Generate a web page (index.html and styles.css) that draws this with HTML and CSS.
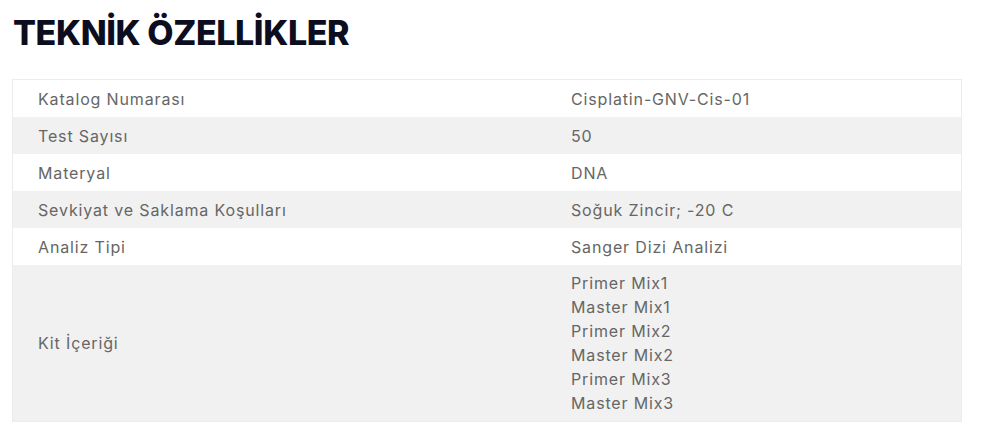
FILE: index.html
```html
<!DOCTYPE html>
<html lang="tr">
<head>
<meta charset="utf-8">
<link rel="stylesheet" href="styles.css">
</head>
<body>
<section class="specs">
  <h2 class="specs-title">TEKNİK ÖZELLİKLER</h2>
  <table class="specs-table">
    <tbody>
      <tr><td class="label">Katalog Numarası</td><td class="value">Cisplatin-GNV-Cis-01</td></tr>
      <tr><td class="label">Test Sayısı</td><td class="value">50</td></tr>
      <tr><td class="label">Materyal</td><td class="value">DNA</td></tr>
      <tr><td class="label">Sevkiyat ve Saklama Koşulları</td><td class="value">Soğuk Zincir; -20 C</td></tr>
      <tr><td class="label">Analiz Tipi</td><td class="value">Sanger Dizi Analizi</td></tr>
      <tr class="multi"><td class="label">Kit İçeriği</td><td class="value">Primer Mix1<br>Master Mix1<br>Primer Mix2<br>Master Mix2<br>Primer Mix3<br>Master Mix3</td></tr>
    </tbody>
  </table>
</section>
</body>
</html>
```
FILE: styles.css
```css
html, body {
  margin: 0;
  padding: 0;
  background: #ffffff;
}
body {
  font-family: "Inter", "Liberation Sans", sans-serif;
}
.specs {
  padding: 12px 38px 0 12px;
}
.specs-title {
  margin: 0 0 25px 1px;
  font-size: 34px;
  line-height: 42px;
  font-weight: 800;
  color: #0c0e1f;
  letter-spacing: -0.4px;
}
.specs-table {
  width: 950px;
  border-collapse: collapse;
  border: 1px solid #ececec;
  font-size: 16px;
  letter-spacing: 0.85px;
  color: #666666;
}
.specs-table td {
  padding: 0 0 0 25px;
  height: 37px;
  vertical-align: middle;
  line-height: 24px;
}
.specs-table td.label {
  width: 508px;
}
.specs-table tr:nth-child(even) td {
  background: #f1f1f1;
}
.specs-table tr.multi td {
  padding-top: 6px;
  padding-bottom: 6px;
}
```
